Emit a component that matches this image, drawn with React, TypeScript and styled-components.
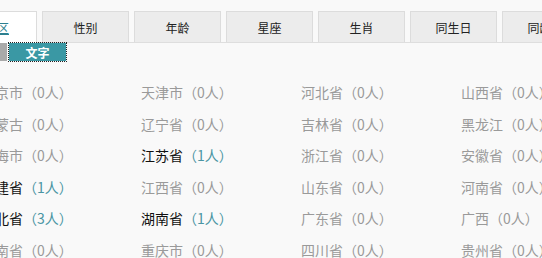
import React from 'react';
import styled, { createGlobalStyle } from 'styled-components';

const GlobalStyle = createGlobalStyle`
    html, body {
        margin: 0;
        padding: 0;
        background: #f9f9f9;
        overflow: hidden;
        font-family: "Noto Sans CJK SC", "Liberation Sans", sans-serif;
    }
`;

const Wrapper = styled.div`
    width: 542px;
    height: 258px;
    overflow: hidden;
    padding-top: 11px;
    box-sizing: border-box;
`;

const TabBar = styled.ul`
    display: flex;
    gap: 5px;
    margin: 0 0 0 -43px;
    padding: 0;
    list-style: none;
    border-bottom: 1px solid #dedede;
    width: 700px;
    height: 31px;
`;

const Tab = styled.li<{ $active?: boolean; $width: number }>`
    flex: 0 0 ${(p) => p.$width}px;
    box-sizing: border-box;
    height: ${(p) => (p.$active ? 32 : 31)}px;
    display: flex;
    align-items: center;
    justify-content: center;
    font-size: 12px;
    color: ${(p) => (p.$active ? '#2c7f8e' : '#222')};
    text-decoration: ${(p) => (p.$active ? 'underline' : 'none')};
    background: ${(p) => (p.$active ? '#fff' : '#ececec')};
    border: 1px solid #dcdcdc;
    border-bottom: none;
`;

const TagRow = styled.div`
    display: flex;
    gap: 2px;
    margin: 0 0 0 -50px;
    height: 18px;
`;

const Tag = styled.span<{ $on?: boolean }>`
    width: 57px;
    display: flex;
    align-items: center;
    justify-content: center;
    font-size: 12px;
    font-weight: bold;
    color: #fff;
    background: ${(p) => (p.$on ? '#3a98a4' : '#aaaaaa')};
    outline: ${(p) => (p.$on ? '1px dotted #222' : 'none')};
`;

const List = styled.ul`
    display: grid;
    grid-template-columns: repeat(4, 160px);
    grid-auto-rows: 31.6px;
    margin: 16px 0 0 -19px;
    padding: 0;
    list-style: none;
`;

const Item = styled.li`
    font-size: 14px;
    line-height: 31.6px;
    white-space: nowrap;
`;

const Name = styled.span<{ $has: boolean }>`
    color: ${(p) => (p.$has ? '#111' : '#9a9a9a')};
`;

const Count = styled.span<{ $has: boolean }>`
    color: ${(p) => (p.$has ? '#4a95a3' : '#9a9a9a')};
`;

const tabs = ['地区', '性别', '年龄', '星座', '生肖', '同生日', '同龄人'];

const regions: [string, number][] = [
    ['北京市', 0], ['天津市', 0], ['河北省', 0], ['山西省', 0],
    ['内蒙古', 0], ['辽宁省', 0], ['吉林省', 0], ['黑龙江', 0],
    ['上海市', 0], ['江苏省', 1], ['浙江省', 0], ['安徽省', 0],
    ['福建省', 1], ['江西省', 0], ['山东省', 0], ['河南省', 0],
    ['湖北省', 3], ['湖南省', 1], ['广东省', 0], ['广西', 0],
    ['海南省', 0], ['重庆市', 0], ['四川省', 0], ['贵州省', 0],
];

export default function App(): JSX.Element {
    return (
        <Wrapper>
            <GlobalStyle />
            <TabBar>
                {tabs.map((t, i) => (
                    <Tab key={t} $active={i === 0} $width={i === 0 ? 80 : 87}>
                        {t}
                    </Tab>
                ))}
            </TabBar>
            <TagRow>
                <Tag>图片</Tag>
                <Tag $on>文字</Tag>
            </TagRow>
            <List>
                {regions.map(([name, n]) => (
                    <Item key={name}>
                        <Name $has={n > 0}>{name}</Name>
                        <Count $has={n > 0}>（{n}人）</Count>
                    </Item>
                ))}
            </List>
        </Wrapper>
    );
}
